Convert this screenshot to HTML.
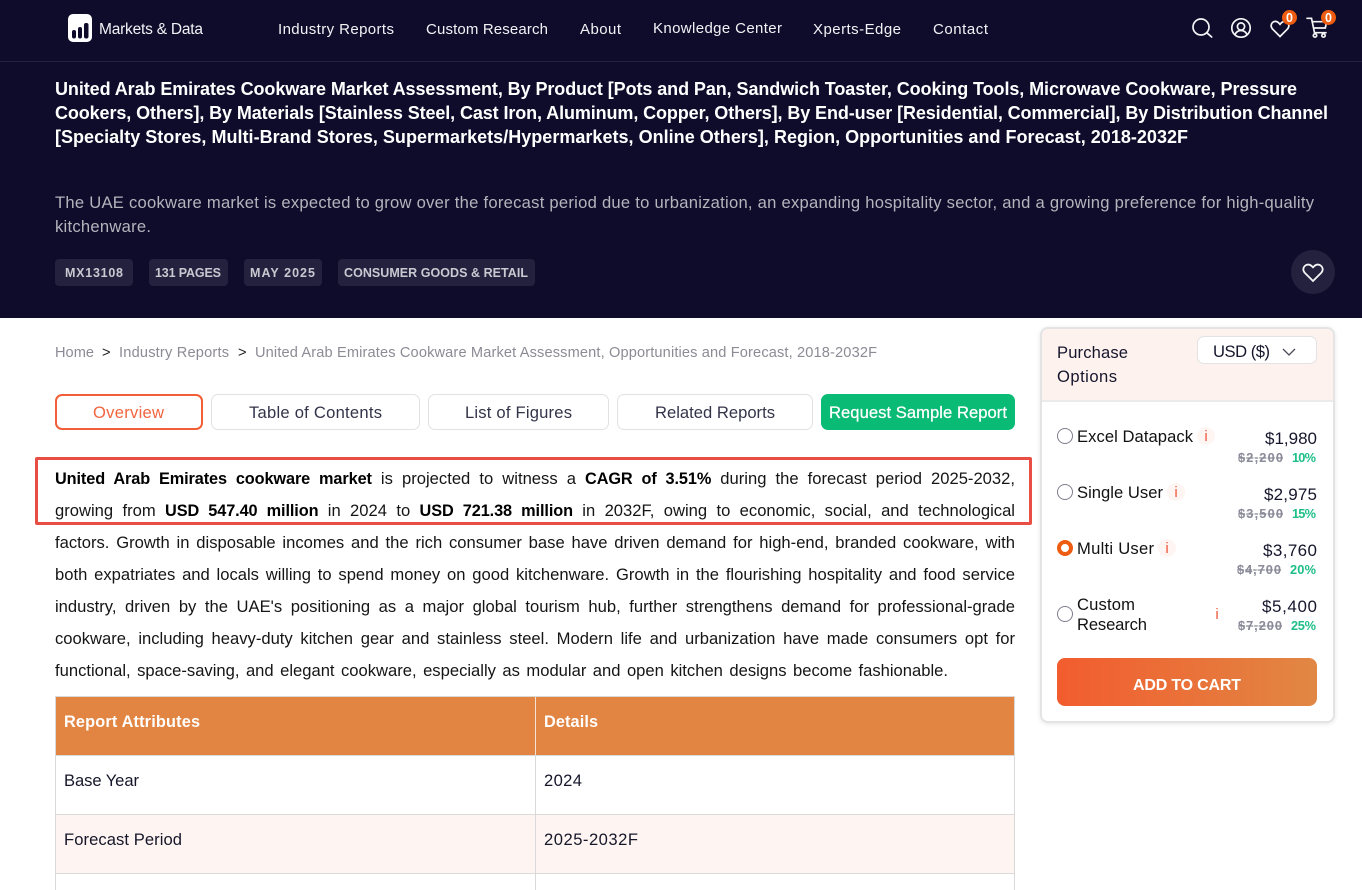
<!DOCTYPE html>
<html lang="en"><head><meta charset="utf-8"><title>United Arab Emirates Cookware Market</title>
<style>
*{box-sizing:border-box}
html,body{margin:0;padding:0;background:#fff}
body{width:1362px;height:890px;overflow:hidden;position:relative;font-family:"Liberation Sans",sans-serif;color:#111}
.a{position:absolute}
.j{position:absolute;height:24px;line-height:24px;text-align:justify;text-align-last:justify;overflow:hidden}
.chip{position:absolute;top:259px;height:27px;background:#23213e;border-radius:4px}
.tab{position:absolute;top:394px;height:36px;border:1px solid #e2e2e6;border-radius:7px;background:#fff}
.b{font-size:16.6px;left:55px;width:960px;letter-spacing:0;color:#151515}
.b b{color:#000;font-size:16.3px;letter-spacing:-.1px}
.h{position:absolute;background:#d9d9d9}
.i{position:absolute;width:18px;height:18px;border-radius:50%;background:#fff6f3}
.r{position:absolute;left:1057px;width:16px;height:16px;border:1.5px solid #7d7d8d;border-radius:50%;background:#fff}
svg text{font-family:"Liberation Sans",sans-serif;white-space:pre}
.n{fill:#f2f2f6;font-size:15px}
.ti{fill:#fff;font-size:18px;font-weight:700}
.d{fill:#b4b4bd;font-size:16.6px}
.c{fill:#c9c9d1;font-size:12.5px;font-weight:700}
.bc{fill:#8b8b95;font-size:14.6px}
.tt{fill:#33334a;font-size:16.6px}
.cell{fill:#16162a;font-size:16.6px}
.th{fill:#fff;font-size:16.3px;font-weight:700}
.lab{fill:#111;font-size:16.6px}
.sh{fill:#15152c;font-size:16.6px}
.pr{fill:#15152c;font-size:17px}
.old{fill:#8a8a98;font-size:12.8px;font-weight:700;text-decoration:line-through}
.pc{fill:#1dbf87;font-size:12.8px;font-weight:700}
.ic{fill:#f0583a;font-size:15px}
</style></head><body>

<div class="a" style="left:0;top:0;width:1362px;height:318px;background:#0e0c2a"></div>
<div class="a" style="left:0;top:61px;width:1362px;height:1px;background:#23213e"></div>

<svg class="a" style="left:68px;top:14px" width="24" height="28" viewBox="0 0 24 28"><rect width="24" height="28" rx="5" fill="#fff"/><rect x="4" y="16" width="4" height="8.500" rx="2" fill="#0e0c2a"/><rect x="10" y="13" width="4" height="11.500" rx="2" fill="#0e0c2a"/><rect x="16" y="9" width="4.500" height="15.500" rx="2" fill="#0e0c2a"/></svg>

<svg class="a" style="left:1185px;top:10px" width="160" height="34" viewBox="0 0 160 34" fill="none" stroke="#f4f4f6" stroke-width="1.700">
<circle cx="16" cy="17" r="8"/><path d="M21.700 22.700l5 4.300" stroke-linecap="round"/>
<circle cx="56" cy="18" r="9.200"/><circle cx="56" cy="16.500" r="3.600"/><path d="M49.800 25c1.200-3 3.300-4.500 6.200-4.500s5 1.500 6.200 4.500"/>
<path d="M95 26.500l-7.300-7.300c-4.600-4.700 1.800-11 6.300-6l1 1.100 1-1.100c4.500-5 10.900 1.300 6.300 6z"/>
<path d="M122 8.300h4.500l3 14.400h11.500" stroke-linecap="round"/><path d="M127 11.700h14.700l-1.400 6.300h-12"/><circle cx="130" cy="25.500" r="1.700"/><circle cx="138.500" cy="25.500" r="1.700"/>
</svg>
<div class="a" style="left:1282px;top:10px;width:15px;height:15px;border-radius:50%;background:#ed5c10"></div>
<div class="a" style="left:1321px;top:10px;width:15px;height:15px;border-radius:50%;background:#ed5c10"></div>

<div class="chip" style="left:55px;width:78px"></div><div class="chip" style="left:149px;width:79px"></div><div class="chip" style="left:244px;width:78px"></div><div class="chip" style="left:338px;width:197px"></div>

<div class="a" style="left:1291px;top:250px;width:44px;height:44px;border-radius:50%;background:#23213e"></div>
<svg class="a" style="left:1302px;top:261px" width="22" height="22" viewBox="0 0 22 22" fill="none" stroke="#f4f4f6" stroke-width="1.800"><path d="M11 20l-8.300-8.300c-4.400-4.900 2.500-11.200 7.200-6.400l1.100 1.100 1.100-1.100c4.700-4.800 11.600 1.500 7.200 6.400z"/></svg>

<div class="tab" style="left:55px;width:148px;border:2px solid #f25e38"></div>
<div class="tab" style="left:211px;width:209px"></div>
<div class="tab" style="left:428px;width:181px"></div>
<div class="tab" style="left:617px;width:196px"></div>
<div class="a" style="left:821px;top:394px;width:194px;height:36px;border-radius:7px;background:#0abb75"></div>

<div class="a" style="left:35px;top:457px;width:997px;height:68px;border:3px solid #e94e44;border-radius:2px"></div>

<div class="j b" style="top:467px"><b>United Arab Emirates cookware market</b> is projected to witness a <b>CAGR of 3.51%</b> during the forecast period 2025-2032,</div>
<div class="j b" style="top:499px">growing from <b>USD 547.40 million</b> in 2024 to <b>USD 721.38 million</b> in 2032F, owing to economic, social, and technological</div>
<div class="j b" style="top:531px">factors. Growth in disposable incomes and the rich consumer base have driven demand for high-end, branded cookware, with</div>
<div class="j b" style="top:563px">both expatriates and locals willing to spend money on good kitchenware. Growth in the flourishing hospitality and food service</div>
<div class="j b" style="top:595px">industry, driven by the UAE's positioning as a major global tourism hub, further strengthens demand for professional-grade</div>
<div class="j b" style="top:627px">cookware, including heavy-duty kitchen gear and stainless steel. Modern life and urbanization have made consumers opt for</div>
<div class="j b" style="top:659px;width:893px">functional, space-saving, and elegant cookware, especially as modular and open kitchen designs become fashionable.</div>

<div class="a" style="left:55px;top:696px;width:960px;height:59px;background:#e28442"></div>
<div class="a" style="left:55px;top:814px;width:960px;height:59px;background:#fef5f2"></div>
<div class="h" style="left:55px;top:696px;width:960px;height:1px"></div>
<div class="h" style="left:55px;top:755px;width:960px;height:1px"></div>
<div class="h" style="left:55px;top:814px;width:960px;height:1px"></div>
<div class="h" style="left:55px;top:873px;width:960px;height:1px"></div>
<div class="h" style="left:55px;top:696px;width:1px;height:194px"></div>
<div class="h" style="left:535px;top:696px;width:1px;height:194px"></div>
<div class="h" style="left:1014px;top:696px;width:1px;height:194px"></div>
<div class="a" style="left:535px;top:697px;width:1px;height:58px;background:#f3e3d6"></div>

<div class="a" style="left:1040px;top:327px;width:295px;height:396px;background:#fff;border:2px solid #e4e4e4;border-radius:8px;box-shadow:0 1px 5px rgba(0,0,0,.1)"></div>
<div class="a" style="left:1042px;top:329px;width:291px;height:73px;background:#fdf2ee;border-bottom:2px solid #ebebeb;border-radius:6px 6px 0 0"></div>
<div class="a" style="left:1197px;top:336px;width:120px;height:28px;background:#fff;border:1px solid #e4e2e2;border-radius:7px"></div>
<svg class="a" style="left:1281px;top:347px" width="16" height="10" viewBox="0 0 16 10" fill="none" stroke="#4a4a5a" stroke-width="1.300"><path d="M2 2l6 6 6-6"/></svg>

<div class="r" style="top:428px"></div><div class="i" style="left:1197px;top:427px"></div>
<div class="r" style="top:484px"></div><div class="i" style="left:1167px;top:483px"></div>
<div class="a" style="left:1057px;top:540px;width:16px;height:16px;border:4.500px solid #ed5c10;border-radius:50%;background:#fff"></div><div class="i" style="left:1158px;top:539px"></div>
<div class="r" style="top:606px"></div>

<div class="a" style="left:1057px;top:658px;width:260px;height:48px;border-radius:8px;background:linear-gradient(90deg,#f25c2e,#e18744)"></div>

<svg class="a" style="left:0;top:0" width="1362" height="890" viewBox="0 0 1362 890">
<text x="99" y="34" textLength="104" fill="#f2f2f6" font-size="15.5">Markets &amp; Data</text>
<text class="n" x="278" y="34" textLength="116">Industry Reports</text>
<text class="n" x="426" y="34" textLength="122">Custom Research</text>
<text class="n" x="580" y="34" textLength="41">About</text>
<text class="n" x="653" y="33" textLength="129">Knowledge Center</text>
<text class="n" x="813" y="34" textLength="88">Xperts-Edge</text>
<text class="n" x="933" y="34" textLength="55">Contact</text>
<text x="1289.500" y="22" text-anchor="middle" fill="#fff" font-size="12.5" font-weight="700">0</text>
<text x="1328.500" y="22" text-anchor="middle" fill="#fff" font-size="12.5" font-weight="700">0</text>

<text class="ti" x="55" y="95" textLength="1242">United Arab Emirates Cookware Market Assessment, By Product [Pots and Pan, Sandwich Toaster, Cooking Tools, Microwave Cookware, Pressure</text>
<text class="ti" x="55" y="119" textLength="1273">Cookers, Others], By Materials [Stainless Steel, Cast Iron, Aluminum, Copper, Others], By End-user [Residential, Commercial], By Distribution Channel</text>
<text class="ti" x="55" y="143" textLength="1133">[Specialty Stores, Multi-Brand Stores, Supermarkets/Hypermarkets, Online Others], Region, Opportunities and Forecast, 2018-2032F</text>
<text class="d" x="55" y="208" textLength="1259">The UAE cookware market is expected to grow over the forecast period due to urbanization, an expanding hospitality sector, and a growing preference for high-quality</text>
<text class="d" x="55" y="232" textLength="96">kitchenware.</text>

<text class="c" x="65" y="277" textLength="58">MX13108</text>
<text class="c" x="155" y="277" textLength="66">131 PAGES</text>
<text class="c" x="250" y="277" textLength="65">MAY 2025</text>
<text class="c" x="344" y="277" textLength="184">CONSUMER GOODS &amp; RETAIL</text>

<text class="bc" x="55" y="357" textLength="39">Home</text>
<text class="bc" x="102" y="357" textLength="8" style="fill:#222">&gt;</text>
<text class="bc" x="119" y="357" textLength="110">Industry Reports</text>
<text class="bc" x="238" y="357" textLength="8" style="fill:#222">&gt;</text>
<text class="bc" x="255" y="357" textLength="622">United Arab Emirates Cookware Market Assessment, Opportunities and Forecast, 2018-2032F</text>

<text class="tt" x="93" y="418" textLength="71" style="fill:#f2653f">Overview</text>
<text class="tt" x="249" y="418" textLength="133">Table of Contents</text>
<text class="tt" x="465" y="418" textLength="107">List of Figures</text>
<text class="tt" x="655" y="418" textLength="120">Related Reports</text>
<text class="tt" x="829" y="418" textLength="178" style="fill:#fff;stroke:#fff;stroke-width:.25px">Request Sample Report</text>

<text class="th" x="64" y="727" textLength="136">Report Attributes</text>
<text class="th" x="544" y="727" textLength="54">Details</text>
<text class="cell" x="64" y="786" textLength="75">Base Year</text>
<text class="cell" x="544" y="786" textLength="38">2024</text>
<text class="cell" x="64" y="845" textLength="118">Forecast Period</text>
<text class="cell" x="544" y="845" textLength="94">2025-2032F</text>

<text class="sh" x="1057" y="358" textLength="71">Purchase</text>
<text class="sh" x="1057" y="382" textLength="60">Options</text>
<text class="sh" x="1213" y="357" textLength="57">USD ($)</text>

<text class="lab" x="1077" y="442" textLength="116">Excel Datapack</text>
<text class="ic" x="1206" y="441" text-anchor="middle">i</text>
<text class="pr" x="1265" y="444" textLength="52">$1,980</text>
<text class="old" x="1238" y="462" textLength="45">$2,200</text>
<text class="pc" x="1292" y="462" textLength="24">10%</text>

<text class="lab" x="1077" y="498" textLength="86">Single User</text>
<text class="ic" x="1176" y="497" text-anchor="middle">i</text>
<text class="pr" x="1264" y="500" textLength="53">$2,975</text>
<text class="old" x="1238" y="518" textLength="45">$3,500</text>
<text class="pc" x="1292" y="518" textLength="24">15%</text>

<text class="lab" x="1077" y="554" textLength="77">Multi User</text>
<text class="ic" x="1167" y="553" text-anchor="middle">i</text>
<text class="pr" x="1263" y="556" textLength="54">$3,760</text>
<text class="old" x="1237" y="574" textLength="44">$4,700</text>
<text class="pc" x="1290" y="574" textLength="26">20%</text>

<text class="lab" x="1077" y="610" textLength="58">Custom</text>
<text class="lab" x="1077" y="630" textLength="70">Research</text>
<text class="ic" x="1217" y="619" text-anchor="middle">i</text>
<text class="pr" x="1262" y="612" textLength="55">$5,400</text>
<text class="old" x="1238" y="630" textLength="44">$7,200</text>
<text class="pc" x="1291" y="630" textLength="25">25%</text>

<text x="1133" y="690" textLength="108" fill="#fff" font-size="16" font-weight="700">ADD TO CART</text>
</svg>

</body></html>
